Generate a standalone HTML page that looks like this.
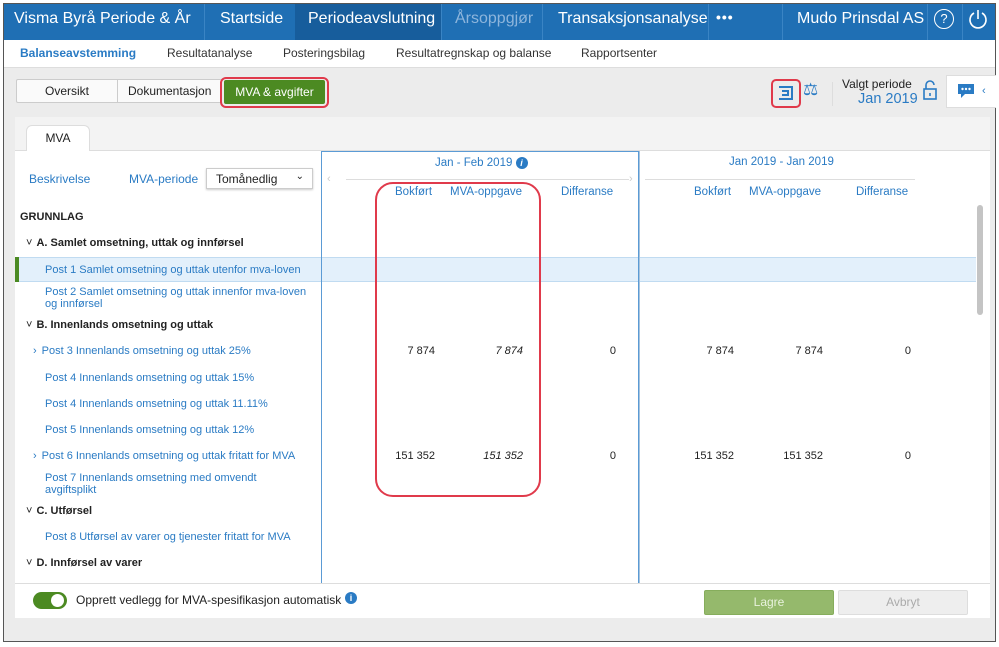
<!DOCTYPE html>
<html><head><meta charset="utf-8"><style>
*{box-sizing:border-box;margin:0;padding:0}
body{width:999px;height:647px;background:#fff;font-family:"Liberation Sans",sans-serif;position:relative;overflow:hidden;font-size:11px;color:#222}
.a{position:absolute;white-space:nowrap}
.frame{left:3px;top:3px;width:993px;height:639px;border:1px solid #555;background:#ececec}
.nav{left:4px;top:4px;width:991px;height:36px;background:#1f6fb4}
.nt{color:#fff;font-size:16px;top:10px}
.div{top:4px;width:1px;height:36px;background:#3a84c4}
.sub{left:4px;top:40px;width:991px;height:28px;background:#fff;border-bottom:1px solid #ddd}
.st{top:46px;font-size:12px;color:#333}
.blue{color:#2a7bc4}
.row{font-size:11px;color:#2a7bc4;left:45px}
.hd{font-size:11px;font-weight:bold;left:37px;color:#222}
.num{font-size:11px;text-align:right;width:60px}
</style></head><body>
<div class="a frame"></div>
<div class="a nav"></div>
<div class="a" style="left:295px;top:4px;width:146px;height:36px;background:#175d9c"></div>
<div class="a nt" style="left:14px">Visma Byrå Periode &amp; År</div>
<div class="a div" style="left:204px"></div>
<div class="a nt" style="left:220px">Startside</div>
<div class="a nt" style="left:308px">Periodeavslutning</div>
<div class="a div" style="left:441px"></div>
<div class="a nt" style="left:455px;color:#8db5dc">Årsoppgjør</div>
<div class="a div" style="left:542px"></div>
<div class="a nt" style="left:558px">Transaksjonsanalyse</div>
<div class="a div" style="left:708px"></div>
<div class="a nt" style="left:716px;font-weight:bold;letter-spacing:1px;top:9px;font-size:14px">•••</div>
<div class="a div" style="left:782px"></div>
<div class="a nt" style="left:797px">Mudo Prinsdal AS</div>
<div class="a div" style="left:927px"></div>
<div class="a" style="left:934px;top:9px;width:20px;height:20px;border:1.5px solid #fff;border-radius:50%;color:#fff;font-size:13px;text-align:center;line-height:17px">?</div>
<div class="a div" style="left:962px"></div>
<svg class="a" style="left:968px;top:8px" width="20" height="22"><path d="M6 5A8 8 0 1 0 14 5" fill="none" stroke="#fff" stroke-width="1.6"/><path d="M10 2V11" stroke="#fff" stroke-width="1.6"/></svg>
<div class="a sub"></div>
<div class="a st" style="left:20px;color:#2a7bc4;font-weight:bold">Balanseavstemming</div>
<div class="a st" style="left:167px">Resultatanalyse</div>
<div class="a st" style="left:283px">Posteringsbilag</div>
<div class="a st" style="left:396px">Resultatregnskap og balanse</div>
<div class="a st" style="left:581px">Rapportsenter</div>
<div class="a" style="left:16px;top:79px;width:206px;height:24px;background:#fafafa;border:1px solid #ccc;border-radius:2px"></div>
<div class="a" style="left:117px;top:79px;width:1px;height:24px;background:#ccc"></div>
<div class="a" style="left:45px;top:84px;font-size:12px">Oversikt</div>
<div class="a" style="left:128px;top:84px;font-size:12px">Dokumentasjon</div>
<div class="a" style="left:220px;top:77px;width:109px;height:31px;border:2px solid #e03a4b;border-radius:6px"></div>
<div class="a" style="left:224px;top:80px;width:101px;height:24px;background:#4c8a22;border-radius:2px;color:#fff;font-size:12px;text-align:center;line-height:24px">MVA &amp; avgifter</div>
<div class="a" style="left:771px;top:79px;width:30px;height:29px;border:2px solid #e03a4b;border-radius:5px"></div>
<svg class="a" style="left:777px;top:85px" width="18" height="17"><path d="M2 2H15V14H2" fill="none" stroke="#2a7bc4" stroke-width="2"/><path d="M5 6H11V10H5" fill="none" stroke="#2a7bc4" stroke-width="2"/></svg>
<div class="a" style="left:803px;top:80px;color:#2a7bc4;font-size:17px">⚖</div>
<div class="a" style="left:832px;top:82px;width:1px;height:24px;background:#ddd"></div>
<div class="a" style="left:842px;top:77px;font-size:12px">Valgt periode</div>
<div class="a" style="left:858px;top:91px;font-size:14.5px;color:#2a7bc4">Jan 2019</div>
<svg class="a" style="left:922px;top:80px" width="16" height="22"><path d="M4 9V5A4 4 0 0 1 12 5" fill="none" stroke="#2a7bc4" stroke-width="1.6"/><rect x="2" y="9" width="12" height="10" fill="none" stroke="#2a7bc4" stroke-width="1.6"/><path d="M8 13V16" stroke="#2a7bc4" stroke-width="1.6"/></svg>
<div class="a" style="left:946px;top:75px;width:50px;height:33px;background:#fff;border:1px solid #ddd;border-right:0"></div>
<svg class="a" style="left:956px;top:82px" width="20" height="18"><path d="M2 2H18V12H9L5 16V12H2Z" fill="#2a7bc4"/><circle cx="6.5" cy="7" r="1.2" fill="#fff"/><circle cx="10" cy="7" r="1.2" fill="#fff"/><circle cx="13.5" cy="7" r="1.2" fill="#fff"/></svg>
<div class="a" style="left:982px;top:85px;color:#2a7bc4;font-size:11px">‹</div>
<div class="a" style="left:15px;top:117px;width:975px;height:34px;background:#f3f3f3"></div>
<div class="a" style="left:15px;top:150px;width:975px;height:1px;background:#ddd"></div>
<div class="a" style="left:26px;top:125px;width:64px;height:26px;background:#fff;border:1px solid #ddd;border-bottom:0;border-radius:6px 6px 0 0;text-align:center;line-height:25px;font-size:12px">MVA</div>
<div class="a" style="left:15px;top:151px;width:975px;height:432px;background:#fff"></div>
<div class="a" style="left:16px;top:257px;width:960px;height:25px;background:#e3f0fb;border-top:1px solid #c0dbf1;border-bottom:1px solid #c0dbf1"></div>
<div class="a" style="left:321px;top:151px;width:318px;height:432px;border:1px solid #5b9bd5;border-bottom:0"></div>
<div class="a" style="left:639px;top:151px;width:1px;height:432px;background:#a9c4dd"></div>
<div class="a" style="left:15px;top:257px;width:4px;height:25px;background:#4c8a22"></div>
<div class="a" style="left:977px;top:205px;width:6px;height:110px;background:#c4c4c4;border-radius:3px"></div>
<div class="a blue" style="left:29px;top:172px;font-size:12px">Beskrivelse</div>
<div class="a blue" style="left:129px;top:172px;font-size:12px">MVA-periode</div>
<div class="a" style="left:206px;top:168px;width:107px;height:21px;border:1px solid #ccc;box-shadow:0 1px 2px #ccc;font-size:12px;padding:3px 9px">Tomånedlig<span style="position:absolute;right:8px;top:2px;font-size:10px">⌄</span></div>
<div class="a" style="left:20px;top:211px;font-size:11px;font-weight:bold">GRUNNLAG</div>
<div class="a hd" style="top:237px"><span style="margin-left:-11px;margin-right:4px;font-weight:normal">˅</span>A. Samlet omsetning, uttak og innførsel</div>
<div class="a row" style="top:264px">Post 1 Samlet omsetning og uttak utenfor mva-loven</div>
<div class="a row" style="top:286px;line-height:12px">Post 2 Samlet omsetning og uttak innenfor mva-loven<br>og innførsel</div>
<div class="a hd" style="top:319px"><span style="margin-left:-11px;margin-right:4px;font-weight:normal">˅</span>B. Innenlands omsetning og uttak</div>
<div class="a row" style="top:345px"><span style="margin-left:-12px;margin-right:5px">›</span>Post 3 Innenlands omsetning og uttak 25%</div>
<div class="a row" style="top:372px">Post 4 Innenlands omsetning og uttak 15%</div>
<div class="a row" style="top:398px">Post 4 Innenlands omsetning og uttak 11.11%</div>
<div class="a row" style="top:424px">Post 5 Innenlands omsetning og uttak 12%</div>
<div class="a row" style="top:450px"><span style="margin-left:-12px;margin-right:5px">›</span>Post 6 Innenlands omsetning og uttak fritatt for MVA</div>
<div class="a row" style="top:472px;line-height:12px">Post 7 Innenlands omsetning med omvendt<br>avgiftsplikt</div>
<div class="a hd" style="top:505px"><span style="margin-left:-11px;margin-right:4px;font-weight:normal">˅</span>C. Utførsel</div>
<div class="a row" style="top:531px">Post 8 Utførsel av varer og tjenester fritatt for MVA</div>
<div class="a hd" style="top:557px"><span style="margin-left:-11px;margin-right:4px;font-weight:normal">˅</span>D. Innførsel av varer</div>
<div class="a blue" style="left:435px;top:157px;font-size:11.5px">Jan - Feb 2019 <span style="display:inline-block;width:12px;height:12px;border-radius:50%;background:#2a7bc4;color:#fff;font-size:9px;text-align:center;line-height:12px;font-style:italic;font-weight:bold">i</span></div>
<div class="a blue" style="left:729px;top:156px;font-size:11.5px">Jan 2019 - Jan 2019</div>
<div class="a" style="left:346px;top:179px;width:283px;height:1px;background:#ddd"></div>
<div class="a" style="left:645px;top:179px;width:270px;height:1px;background:#ddd"></div>
<div class="a" style="left:327px;top:173px;color:#ccc;font-size:11px">‹</div>
<div class="a" style="left:629px;top:173px;color:#ccc;font-size:11px">›</div>
<div class="a blue" style="left:395px;top:186px;font-size:11.5px">Bokført</div>
<div class="a blue" style="left:450px;top:186px;font-size:11.5px">MVA-oppgave</div>
<div class="a blue" style="left:561px;top:186px;font-size:11.5px">Differanse</div>
<div class="a blue" style="left:694px;top:186px;font-size:11.5px">Bokført</div>
<div class="a blue" style="left:749px;top:186px;font-size:11.5px">MVA-oppgave</div>
<div class="a blue" style="left:856px;top:186px;font-size:11.5px">Differanse</div>
<div class="a" style="left:375px;top:182px;width:166px;height:315px;border:2px solid #e03a4b;border-radius:18px"></div>
<div class="a num" style="left:375px;top:345px">7 874</div>
<div class="a num" style="left:463px;top:345px;font-style:italic">7 874</div>
<div class="a num" style="left:556px;top:345px">0</div>
<div class="a num" style="left:674px;top:345px">7 874</div>
<div class="a num" style="left:763px;top:345px">7 874</div>
<div class="a num" style="left:851px;top:345px">0</div>
<div class="a num" style="left:375px;top:450px">151 352</div>
<div class="a num" style="left:463px;top:450px;font-style:italic">151 352</div>
<div class="a num" style="left:556px;top:450px">0</div>
<div class="a num" style="left:674px;top:450px">151 352</div>
<div class="a num" style="left:763px;top:450px">151 352</div>
<div class="a num" style="left:851px;top:450px">0</div>
<div class="a" style="left:15px;top:583px;width:975px;height:1px;background:#ddd"></div>
<div class="a" style="left:15px;top:584px;width:975px;height:34px;background:#fff"></div>
<div class="a" style="left:33px;top:592px;width:34px;height:17px;border-radius:9px;background:#4c8a22"></div>
<div class="a" style="left:51px;top:594px;width:13px;height:13px;border-radius:50%;background:#fff"></div>
<div class="a" style="left:76px;top:593px;font-size:12px">Opprett vedlegg for MVA-spesifikasjon automatisk</div>
<div class="a" style="left:345px;top:592px;width:12px;height:12px;border-radius:50%;background:#2a7bc4;color:#fff;font-size:9px;text-align:center;line-height:12px;font-weight:bold">i</div>
<div class="a" style="left:704px;top:590px;width:130px;height:25px;background:#95b96c;border:1px solid #86ad5c;border-radius:2px;color:#e8f2dd;text-align:center;line-height:23px;font-size:12px">Lagre</div>
<div class="a" style="left:838px;top:590px;width:130px;height:25px;background:#eee;border:1px solid #ddd;border-radius:2px;color:#aaa;text-align:center;line-height:23px;font-size:12px">Avbryt</div>
</body></html>
